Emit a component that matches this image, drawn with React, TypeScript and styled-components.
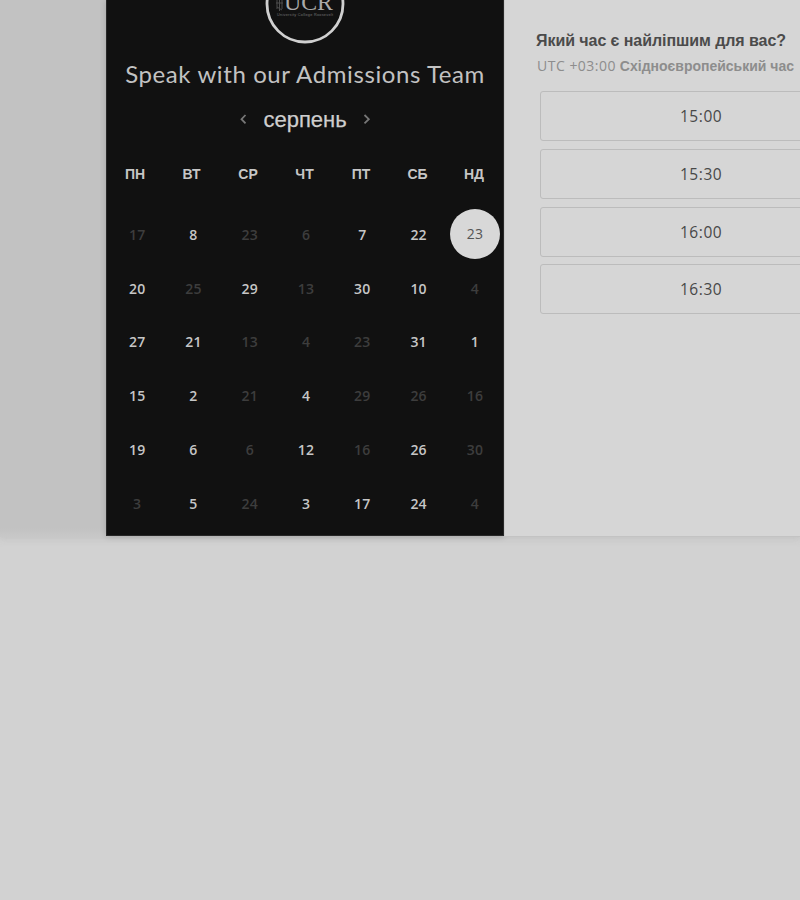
import React from 'react';
import styled, { createGlobalStyle } from 'styled-components';

const Global = createGlobalStyle`
  *, *::before, *::after { box-sizing: border-box; }
  body { margin: 0; background: #d2d2d2; font-family: "Liberation Sans", Arial, sans-serif; overflow: hidden; }
  button { font: inherit; color: inherit; background: none; border: 0; padding: 0; margin: 0; }
`;

const Page = styled.div`
  width: 800px;
  height: 900px;
  overflow: hidden;
  background: #d2d2d2;
`;

const Scheduler = styled.main`
  display: flex;
  height: 537px;
  background: linear-gradient(#c2c2c2 528px, #c8c8c8 537px);
  box-shadow: 0 1px 7px 1px rgba(165, 165, 165, 0.35);
`;

const Calendar = styled.section`
  flex: 0 0 398px;
  margin-left: 106px;
  height: 536px;
  background: #111;
  border: 1px solid #282828;
  border-top: 0;
  box-shadow: 0 1px 6px rgba(0, 0, 0, 0.16);
  display: flex;
  flex-direction: column;
  align-items: center;
`;

const Logo = styled.svg`
  display: block;
  width: 80px;
  height: 44px;
`;

const Title = styled.h1`
  margin: 14px 0 0;
  font: 400 24px/32px Lato, "Open Sans", sans-serif;
  letter-spacing: 0.6px;
  color: #c2c2c2;
  white-space: nowrap;
`;

const MonthBar = styled.div`
  display: flex;
  align-items: center;
  justify-content: center;
  gap: 15px;
  margin-top: 16px;
  height: 28px;
`;

const Month = styled.h2`
  margin: 0;
  font-size: 22px;
  font-weight: 400;
  line-height: 28px;
  color: #cecece;
  -webkit-text-stroke: 0.25px #cecece;
`;

const Arrow = styled.button`
  display: flex;
  width: 10px;
  height: 14px;
  color: #777;
  svg { width: 10px; height: 14px; }
`;

const Week = styled.div`
  display: grid;
  grid-template-columns: repeat(7, 56.5px);
  width: 395.5px;
  margin: 30px 0 0 -1px;
`;

const Weekday = styled.span`
  font-size: 14px;
  font-weight: 700;
  line-height: 20px;
  text-align: center;
  color: #c6c6c6;
`;

const Days = styled.div`
  display: grid;
  grid-template-columns: repeat(7, 56.3px);
  grid-auto-rows: 53.8px;
  width: 394.1px;
  margin: 24px 0 0 2px;
`;

const Day = styled.button<{ $state: 'on' | 'off' | 'selected' }>`
  display: flex;
  align-items: center;
  justify-content: center;
  justify-self: center;
  align-self: center;
  width: 50px;
  height: 50px;
  border-radius: 50%;
  font: ${p => (p.$state === 'selected' ? 400 : 600)} 14px/20px "Open Sans", sans-serif;
  letter-spacing: 0.2px;
  color: ${p => ({ on: '#c6c6c6', off: '#3d3d3d', selected: '#555' })[p.$state]};
  background: ${p => (p.$state === 'selected' ? '#d8d8d8' : 'transparent')};
  margin-top: ${p => (p.$state === 'selected' ? '-2px' : '0')};
`;

const Times = styled.section`
  flex: 0 0 360px;
  height: 537px;
  padding: 30px 0 0 31px;
  background: #d6d6d6;
  border-left: 1px solid #c9c9c9;
  border-bottom: 1px solid #c3c3c3;
`;

const Question = styled.h3`
  margin: 0;
  font-size: 16px;
  font-weight: 700;
  line-height: 22px;
  letter-spacing: -0.07px;
  color: #4b4b4b;
  white-space: nowrap;
`;

const Zone = styled.p`
  margin: 4px 0 0 1px;
  font-size: 14px;
  font-weight: 700;
  line-height: 20px;
  color: #8d8d8d;
  white-space: nowrap;
`;

const Offset = styled.span`
  font: 400 14px/20px "Open Sans", sans-serif;
  letter-spacing: 0.48px;
`;

const Slots = styled.div`
  display: flex;
  flex-direction: column;
  gap: 7.8px;
  margin: 15px 0 0 4px;
  width: 322px;
`;

const Slot = styled.button`
  height: 50px;
  border: 1px solid #bcbcbc;
  border-radius: 3px;
  font: 400 15.5px/22px "Open Sans", sans-serif;
  letter-spacing: 0.55px;
  color: #484848;
  text-align: center;
`;

const weekdays = ['ПН', 'ВТ', 'СР', 'ЧТ', 'ПТ', 'СБ', 'НД'];
const days = [
  [17, 8, 23, 6, 7, 22, 23],
  [20, 25, 29, 13, 30, 10, 4],
  [27, 21, 13, 4, 23, 31, 1],
  [15, 2, 21, 4, 29, 26, 16],
  [19, 6, 6, 12, 16, 26, 30],
  [3, 5, 24, 3, 17, 24, 4],
];
const available = ['0100110', '1010110', '1100011', '1101000', '1101010', '0101110'];

export default function App() {
  return (
    <>
      <Global />
      <Page>
        <Scheduler>
          <Calendar>
            <Logo viewBox="0 0 80 44" aria-label="UCR">
              <circle cx="40" cy="4" r="38" fill="#111" stroke="#d0d0d0" strokeWidth="2.8" />
              <g stroke="#4d4d4d" strokeWidth="1" fill="none">
                <path d="M12 0v9M14.5 0v11M17 0v9M11 3h7M12 7l5 3" />
              </g>
              <text x="19" y="10" fontFamily="Liberation Serif" fontSize="23" textLength="49" lengthAdjust="spacingAndGlyphs" fill="#aaa">UCR</text>
              <text x="12" y="15.5" fontFamily="Liberation Sans" fontSize="3.8" textLength="56" fill="#747474">University College Roosevelt</text>
            </Logo>
            <Title>Speak with our Admissions Team</Title>
            <MonthBar>
              <Arrow aria-label="Попередній місяць">
                <svg viewBox="0 0 10 14" fill="none" stroke="currentColor" strokeWidth="1.8"><path d="M7.5 2 3.5 6.2 7.5 10.4" /></svg>
              </Arrow>
              <Month>серпень</Month>
              <Arrow aria-label="Наступний місяць">
                <svg viewBox="0 0 10 14" fill="none" stroke="currentColor" strokeWidth="1.8"><path d="M2.5 2 6.8 6.2 2.5 10.4" /></svg>
              </Arrow>
            </MonthBar>
            <Week>{weekdays.map(d => <Weekday key={d}>{d}</Weekday>)}</Week>
            <Days>
              {days.flatMap((row, r) => row.map((day, c) => (
                <Day key={`${r}-${c}`} $state={r === 0 && c === 6 ? 'selected' : available[r][c] === '1' ? 'on' : 'off'}>{day}</Day>
              )))}
            </Days>
          </Calendar>
          <Times>
            <Question>Який час є найліпшим для вас?</Question>
            <Zone><Offset>UTC +03:00</Offset> Східноєвропейський час</Zone>
            <Slots>
              {['15:00', '15:30', '16:00', '16:30'].map(t => <Slot key={t}>{t}</Slot>)}
            </Slots>
          </Times>
        </Scheduler>
      </Page>
    </>
  );
}
